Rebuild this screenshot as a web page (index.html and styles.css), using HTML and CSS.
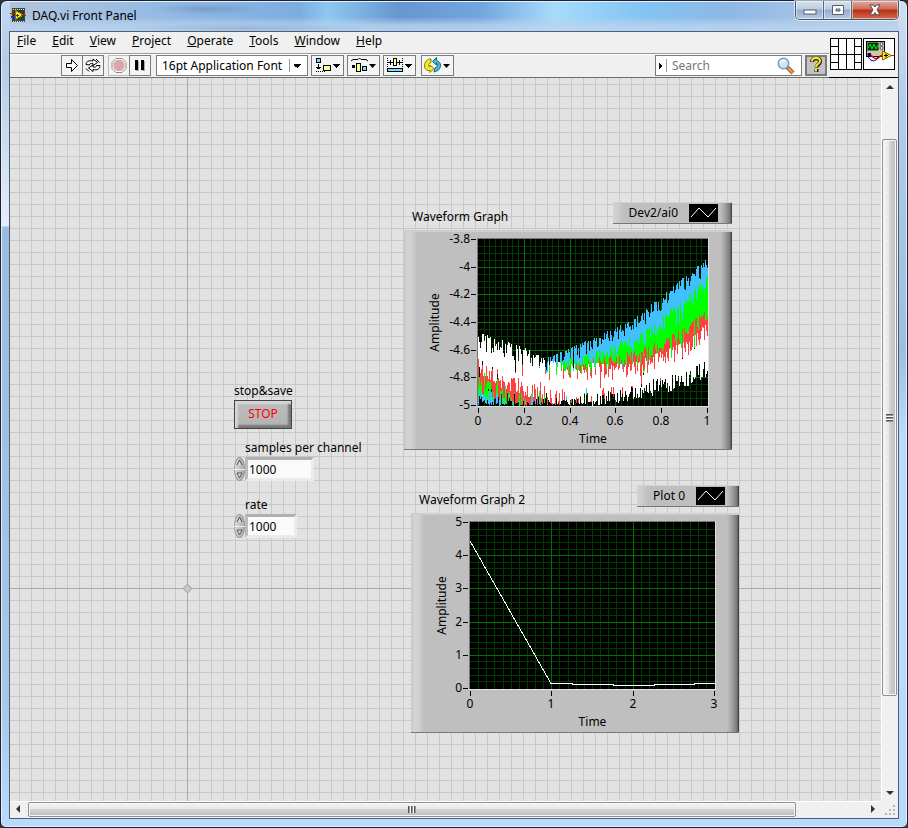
FILE: index.html
```html
<!DOCTYPE html>
<html lang="en">
<head>
  <meta charset="UTF-8" />
  <meta name="viewport" content="width=device-width, initial-scale=1.0" />
  <title>DAQ.vi Front Panel</title>
  <link rel="stylesheet" href="styles.css">
</head>
<body>
  <div class="window">
    <div class="titlebar">
      <svg class="app-icon" width="16" height="14" viewBox="0 0 16 14" shape-rendering="crispEdges">
        <rect x="2" width="13" height="14" fill="#444"/>
        <path d="M3 1h11M3 13h11" stroke="#ddd" stroke-dasharray="1 1"/>
        <rect x="3" y="2" width="11" height="10" fill="#164b20"/>
        <path d="M5 2v10l8-5z" fill="#ffe81a" stroke="#8a7900"/>
        <path d="M0 5h5" stroke="#e00"/><path d="M1 9h4" stroke="#22f" stroke-width="2"/>
        <path d="M12 7h4" stroke="#e00"/><path d="M6 7h3M7.500 5.500v3" stroke="#333"/>
      </svg>
      <h1 class="title">DAQ.vi Front Panel</h1>
      <div class="caption">
        <button aria-label="Minimize"><svg width="14" height="12" viewBox="0 0 14 12"><rect x="1" y="6" width="12" height="4" fill="#fff" stroke="#555e70"/></svg></button>
        <button aria-label="Maximize"><svg width="14" height="12" viewBox="0 0 14 12"><path fill-rule="evenodd" d="M1.500 1.500h11v9h-11zM5 5h4v2h-4z" fill="#fff" stroke="#555e70"/></svg></button>
        <button class="close" aria-label="Close"><svg width="14" height="12" viewBox="0 0 14 12"><path d="M2 1h3.500l1.500 2 1.500-2h3.500l-3 4.800 3 5h-3.500l-1.500-2.300-1.500 2.300h-3.500l3-5z" fill="#fff" stroke="#5d4650"/></svg></button>
      </div>
    </div>

    <div class="client">
      <header class="header">
        <div class="bars">
          <nav class="menu">
            <a href="#"><u>F</u>ile</a>
            <a href="#"><u>E</u>dit</a>
            <a href="#"><u>V</u>iew</a>
            <a href="#"><u>P</u>roject</a>
            <a href="#"><u>O</u>perate</a>
            <a href="#"><u>T</u>ools</a>
            <a href="#"><u>W</u>indow</a>
            <a href="#"><u>H</u>elp</a>
          </nav>
          <div class="toolbar">
            <div class="group joined">
              <button class="tool" aria-label="Run"><svg width="20" height="19" viewBox="0 0 20 19"><path d="M4.500 7.500h5v-4l6 6-6 6v-4h-5z" fill="#fff" stroke="#000"/></svg></button>
              <button class="tool" aria-label="Run continuously"><svg width="20" height="19" viewBox="0 0 20 19"><path d="M3 8.500c0-3 3-4.500 7-3.500v-2l4.500 3.500-4.500 3v-2c-2-.5-3.500 0-3.500 1.500z" fill="#fff" stroke="#000"/><path d="M17 9.500c0 3.500-3 5-7 4v2l-4.500-3.500 4.500-3v2c2 .5 3.500 0 3.500-1.500z" fill="#fff" stroke="#000"/><path d="M3 12.500l3 3M13 3l3.500 3.500" stroke="#000"/></svg></button>
            </div>
            <div class="group joined">
              <button class="tool off" aria-label="Abort" disabled><svg width="20" height="19" viewBox="0 0 20 19"><path d="M7 2.500h6l4 4v6l-4 4h-6l-4-4v-6z" fill="#fff" stroke="#888"/><path d="M7.500 4h5l3 3v5l-3 3h-5l-3-3v-5z" fill="#dda5a5"/></svg></button>
              <button class="tool" aria-label="Pause"><svg width="20" height="19" viewBox="0 0 20 19"><path d="M6 5h3v10h-3zM12 5h3v10h-3z" fill="#aaa"/><path d="M5 4h3v10h-3zM11 4h3v10h-3z"/></svg></button>
            </div>
            <select class="font-ring" aria-label="Text settings"><option>16pt Application Font</option></select>
            <div class="group spaced">
              <button class="tool wide" aria-label="Align objects"><svg width="31" height="19" viewBox="0 0 31 19" shape-rendering="crispEdges"><rect x="4.500" y="2.500" width="4" height="4" fill="#6de0ff" stroke="#000"/><path d="M4 15.500h9" stroke="#000" stroke-dasharray="1 1"/><path d="M6.500 8v5M4 11.500h5M5 12.500h3" stroke="#000"/><rect x="11.500" y="9.500" width="7" height="5" fill="#ffff9a" stroke="#000"/><path d="M21 8h7l-3.500 4z"/></svg></button>
              <button class="tool wide" aria-label="Distribute objects"><svg width="31" height="19" viewBox="0 0 31 19"><path d="M3 5l2-1.500h5l1.500-1.500 1.500 1.500h5l2 1.500" fill="none" stroke="#000"/><rect x="4" y="9" width="3" height="3"/><rect x="8.500" y="7.500" width="4" height="8" fill="#ffff9a" stroke="#000"/><rect x="14.500" y="10.500" width="4" height="4" fill="#6de0ff" stroke="#000"/><path d="M21 8h7l-3.500 4z"/></svg></button>
              <button class="tool wide" aria-label="Resize objects"><svg width="31" height="19" viewBox="0 0 31 19" shape-rendering="crispEdges"><path d="M3.500 2v9M18.500 2v9" stroke="#000" stroke-dasharray="1 1"/><path d="M4 6.500h5M13 6.500h5M6.500 4v5M15.500 4v5" stroke="#000"/><rect x="9.500" y="2.500" width="3" height="7" fill="#ffff9a" stroke="#000"/><rect x="3.500" y="12.500" width="15" height="3" fill="#6de0ff" stroke="#000"/><path d="M21 8h7l-3.500 4z"/></svg></button>
            </div>
            <button class="tool wide" aria-label="Reorder"><svg width="31" height="19" viewBox="0 0 31 19"><path d="M9 3c-4 0-6.500 3-6.500 7 0 2 1 3.500 3 4.500h2.500v2l4-4-4-3.500v2c-2 0-2-3.500 1-4.500z" fill="#f3ec16" stroke="#807b00"/><path d="M12 16c4-1 6.500-3 6.500-7 0-2-1.500-3.500-4-4.500v-3l-4 4 4 3.500v-2c2 1 1.500 4-1.500 5z" fill="#4bbfd2" stroke="#12606c"/><path d="M21 8h7l-3.500 4z"/></svg></button>
            <div class="search">
              <svg width="12" height="19" viewBox="0 0 12 19" shape-rendering="crispEdges"><path d="M3 7l4 3-4 3z"/><path d="M10.500 3v13" stroke="#999"/></svg>
              <input type="search" aria-label="Search" placeholder="Search">
              <svg width="18" height="18" viewBox="0 0 18 18"><path d="M10 10l6 6" stroke="#97551f" stroke-width="4"/><path d="M11 11l5 5" stroke="#eda454" stroke-width="2"/><circle cx="6.500" cy="6.500" r="5.200" fill="#c6e8fb" stroke="#8398ad" stroke-width="1.500"/><path d="M3 6c1-3 4-3 5-2" fill="none" stroke="#fff" stroke-width="1.500"/></svg>
            </div>
            <button class="help" aria-label="Context help"><svg width="18" height="17" viewBox="0 0 18 17"><path d="M5 5c0-5 8-5 8-.5 0 3-3.500 3-3.500 6M9.500 12v3" fill="none" stroke="#222" stroke-width="4"/><path d="M5 4.500c0-5 8-4.500 8-.5 0 3-4 3-4 6M9 12v2.500" fill="none" stroke="#ffec00" stroke-width="2"/></svg></button>
          </div>
        </div>
        <div class="icon-pane">
          <svg width="32" height="32" viewBox="0 0 32 32" shape-rendering="crispEdges"><rect x=".5" y=".5" width="31" height="31" fill="#fff" stroke="#000"/><path d="M8.500 0v32M16.500 0v32M24.500 0v32M0 16.500h32M0 8.500h8M0 24.500h8M24 8.500h8M24 24.500h8" stroke="#000"/></svg>
          <svg width="32" height="32" viewBox="0 0 32 32"><rect x=".5" y=".5" width="31" height="31" fill="#fff" stroke="#000"/><rect x="3.500" y="3.500" width="18" height="15" fill="#c9c9a2" stroke="#000"/><rect x="4.500" y="4.500" width="11" height="8" fill="#031"/><path d="M5 10l2-4 2 5 2-5 2 5 2-4" fill="none" stroke="#0e0"/><circle cx="18.500" cy="6" r="1.500" fill="#fff" stroke="#444"/><circle cx="18.500" cy="10" r="1.500" fill="#fff" stroke="#444"/><path d="M4 16.500c4-3 6 6 10 4s4-4 6-3" fill="none" stroke="#e00" stroke-width="1.500"/><path d="M5 17c1 8 10 7 10 1" fill="none" stroke="#008"/><rect x="5" y="15" width="3" height="3" fill="#008"/><path d="M28 17.500h3" stroke="#e00"/><path d="M19.500 13v9l9-4.500z" fill="#ffe81a" stroke="#777000"/><path d="M21 17.500h4M23 15.500v4" stroke="#000"/></svg>
        </div>
      </header>

      <main class="panel">
        <span class="origin"></span>

        <div class="control stop">
          <label for="stop">stop&amp;save</label>
          <button id="stop" class="stop-button">STOP</button>
        </div>
        <div class="control samples">
          <label for="samples">samples per channel</label>
          <div class="numeric">
            <span class="spin">
              <button aria-label="Increment samples"><svg width="11" height="11" viewBox="0 0 11 11"><path d="M3 8l2.500-5 2.500 5" fill="#ddd" stroke="#444"/></svg></button>
              <button aria-label="Decrement samples"><svg width="11" height="11" viewBox="0 0 11 11"><path d="M3 3l2.500 5 2.500-5z" fill="#ddd" stroke="#555"/></svg></button>
            </span>
            <input id="samples" type="text" value="1000">
          </div>
        </div>
        <div class="control rate">
          <label for="rate">rate</label>
          <div class="numeric">
            <span class="spin">
              <button aria-label="Increment rate"><svg width="11" height="11" viewBox="0 0 11 11"><path d="M3 8l2.500-5 2.500 5" fill="#ddd" stroke="#444"/></svg></button>
              <button aria-label="Decrement rate"><svg width="11" height="11" viewBox="0 0 11 11"><path d="M3 3l2.500 5 2.500-5z" fill="#ddd" stroke="#555"/></svg></button>
            </span>
            <input id="rate" type="text" value="1000">
          </div>
        </div>

        <section class="graph graph-1">
          <div class="graph-head">
            <h2>Waveform Graph</h2>
            <div class="legend">Dev2/ai0 <svg width="29" height="18" viewBox="0 0 29 18"><rect width="29" height="18"/><path d="M2 13l8-9 9 9 8-9" fill="none" stroke="#fff"/></svg></div>
          </div>
          <svg class="chart" id="chart1" width="328" height="217" viewBox="0 0 328 217"></svg>
        </section>
        <section class="graph graph-2">
          <div class="graph-head">
            <h2>Waveform Graph 2</h2>
            <div class="legend">Plot 0 <svg width="29" height="18" viewBox="0 0 29 18"><rect width="29" height="18"/><path d="M2 13l8-9 9 9 8-9" fill="none" stroke="#fff"/></svg></div>
          </div>
          <svg class="chart" id="chart2" width="328" height="217" viewBox="0 0 328 217"></svg>
        </section>
      </main>

      <div class="vscroll">
        <svg class="arrow" width="17" height="17" viewBox="0 0 17 17"><path d="M4 11l4-4 4 4z"/></svg>
        <div class="vtrack"><div class="vthumb"><span class="ridges"></span></div></div>
        <svg class="arrow" width="17" height="17" viewBox="0 0 17 17"><path d="M4 7h8l-4 4z"/></svg>
      </div>
      <div class="hscroll">
        <svg class="arrow" width="18" height="17" viewBox="0 0 18 17"><path d="M10 3v8l-4-4z"/></svg>
        <div class="htrack"><div class="hthumb"><span class="ridges upright"></span></div></div>
        <svg class="arrow" width="17" height="17" viewBox="0 0 17 17"><path d="M7 3v8l4-4z"/></svg>
      </div>
      <div class="grip"><svg width="12" height="12" viewBox="0 0 12 12" fill="#b5b5b5"><path d="M9 1h2v2h-2zM9 5h2v2h-2zM5 5h2v2h-2zM9 9h2v2h-2zM5 9h2v2h-2zM1 9h2v2h-2z"/></svg></div>
    </div>
  </div>
  <script src="script.js"></script>
</body>
</html>
```

FILE: styles.css
```css
:root {
  --face: #f0f0f0;
  --gray: #bfbfbf;
  --line: #7a7a7a;
  --font: "Noto Sans", "Open Sans", sans-serif;
}

* {
  margin: 0;
  padding: 0;
  box-sizing: border-box;
}

body {
  background: #333;
  font: 12px/16px var(--font);
  color: #000;
}

button,
input,
select {
  font: inherit;
  color: inherit;
}

svg {
  display: block;
}

.window {
  display: flex;
  flex-direction: column;
  height: 100vh;
  padding: 0 8px 8px;
  border: 1px solid #1b2130;
  border-radius: 7px 7px 6px 6px;
  box-shadow: inset 0 0 0 1px #e4f2ff;
  background:
    radial-gradient(closest-side, rgba(60, 90, 130, 0.25), transparent) 150px 2px / 110px 12px no-repeat,
    radial-gradient(closest-side, rgba(60, 90, 130, 0.2), transparent) 110px 22px / 270px 10px no-repeat,
    linear-gradient(#c0d8f2, #b4cce6 60px, #e6eef7 225px, #9cbbdd 226px, #a9c7e7 700px, transparent 820px) left / 9px 100% no-repeat,
    linear-gradient(#d2dff0, #b3cce9 100px, #9dbde0 350px, #b9dafc 430px, #b9dafc) right / 9px 100% no-repeat,
    linear-gradient(transparent 16px, rgba(186, 210, 236, 0.8) 24px, #b9dafc 40px),
    linear-gradient(90deg, #b2c3d6, #a8c3e0 6%, #90b8e4 20%, #7cade0 33%, #8ec8f0 36%, #6597d0 44%, #72a6df 53%, #a5dcfb 61%, #83c3f3 71%, #8db8e5 80%, #bdd0e8);
}

.titlebar {
  display: flex;
  align-items: flex-start;
  height: 30px;
}

.app-icon {
  margin: 7px 6px 0 1px;
}

.title {
  flex: 1;
  padding-top: 7px;
  font-size: 12px;
  font-weight: 400;
}

.caption {
  display: flex;
  border: 1px solid #46566d;
  border-top: 0;
  border-radius: 0 0 5px 5px;
  overflow: hidden;
  box-shadow: 0 0 0 1px rgba(255, 255, 255, 0.6);
}

.caption button {
  display: flex;
  align-items: center;
  justify-content: center;
  width: 28px;
  height: 18px;
  border: 0;
  border-right: 1px solid #56667e;
  background: linear-gradient(#d5e1ef, #bccde1 45%, #93acc9 50%, #b7cce4);
  box-shadow: inset 0 0 0 1px rgba(255, 255, 255, 0.5);
}

.caption .close {
  width: 46px;
  border-right: 0;
  background: linear-gradient(#e3a99c, #cf6b59 45%, #b52f19 50%, #d6694a);
}

.client {
  flex: 1;
  display: grid;
  grid-template-columns: 1fr 17px;
  grid-template-rows: auto 1fr 17px;
  border: 1px solid #4d5f77;
  background: var(--face);
  min-height: 0;
}

.header {
  grid-column: 1 / 3;
  display: flex;
}

.bars {
  flex: 1;
}

.menu {
  display: flex;
  gap: 16px;
  height: 22px;
  padding: 1px 7px 0;
  border-bottom: 1px solid #999;
  box-shadow: 0 1px #fff;
}

.menu a {
  color: inherit;
  text-decoration: none;
}

.toolbar {
  display: flex;
  align-items: center;
  gap: 5px;
  height: 24px;
  padding: 0 2px 0 51px;
  border-bottom: 1px solid #6e6e6e;
}

.group {
  display: flex;
}

.joined .tool + .tool {
  margin-left: -1px;
}

.joined + .joined {
  margin-left: -1px;
}

.spaced {
  gap: 3px;
}

.tool {
  width: 22px;
  height: 21px;
  border: 1px solid var(--line);
  background: #f4f4f4;
}

.tool.wide {
  width: 33px;
}

.tool.off {
  border-color: #bbb;
}

.font-ring {
  width: 152px;
  height: 21px;
  margin-right: -2px;
  padding-left: 5px;
  border: 1px solid var(--line);
  border-radius: 0;
  appearance: none;
  background:
    conic-gradient(from -45deg at 50% 100%, #000 90deg, transparent 0) right 6px top 8px / 8px 4px no-repeat,
    linear-gradient(#999, #999) right 17px center / 1px 13px no-repeat,
    #fff;
}

.search {
  display: flex;
  align-items: center;
  width: 147px;
  height: 21px;
  margin-left: auto;
  margin-right: -2px;
  padding-right: 6px;
  border: 1px solid var(--line);
  background: #fff;
}

.search input {
  flex: 1;
  min-width: 0;
  padding-left: 4px;
  border: 0;
  background: none;
}

.search input::placeholder {
  color: #777;
}

.help {
  width: 22px;
  height: 21px;
  border: 2px solid var(--line);
  background: #c3c3c3;
}

.icon-pane {
  display: flex;
  gap: 1px;
  padding: 6px 3px 0 1px;
  border-bottom: 1px solid #000;
}

/* front panel */

.panel {
  position: relative;
  overflow: hidden;
  background:
    linear-gradient(#aaa, #aaa) 177px 0 / 1px 100% no-repeat,
    linear-gradient(#aaa, #aaa) 0 510px / 100% 1px no-repeat,
    linear-gradient(90deg, #c8c8c8 1px, transparent 1px) 9px 0 / 12px 12px,
    linear-gradient(#c8c8c8 1px, transparent 1px) 0 6px / 12px 12px,
    #e2e2e2;
}

.origin {
  position: absolute;
  left: 174px;
  top: 507px;
  width: 7px;
  height: 7px;
  border: 1px solid #aaa;
  background: #c8c8c8;
  transform: rotate(45deg);
}

.control,
.graph {
  position: absolute;
}

.control label {
  display: block;
  white-space: nowrap;
}

.stop {
  left: 224px;
  top: 305px;
}

.stop-button {
  display: block;
  width: 58px;
  height: 29px;
  margin-top: 1px;
  padding-bottom: 2px;
  border: 1px solid #444;
  background: linear-gradient(#bdbdbd, #b3b3b3);
  box-shadow: inset 3px 3px 2px #d6d6d6, inset -3px -3px 2px #777;
  color: #f00;
}

.samples {
  left: 224px;
  top: 362px;
}

.rate {
  left: 224px;
  top: 419px;
}

.samples label,
.rate label {
  padding-left: 11px;
}

.numeric {
  display: flex;
  margin-top: 1px;
}

.spin {
  display: flex;
  flex-direction: column;
  width: 11px;
  height: 24px;
  border-radius: 50%;
  background: linear-gradient(90deg, #e0e0e0, #a8a8a8);
  box-shadow: inset 0 0 0 1px #999;
  overflow: hidden;
}

.spin button {
  flex: 1;
  border: 0;
  background: none;
}

.spin button + button {
  border-top: 1px solid #eee;
}

.numeric input {
  width: 69px;
  height: 24px;
  padding-left: 1px;
  border: solid;
  border-width: 3px;
  border-color: #b0b0b0 #ebebeb #ebebeb #bbb;
  background: #fafafa;
}

.rate input {
  width: 52px;
}

.graph-1 {
  left: 394px;
  top: 124px;
}

.graph-2 {
  left: 401px;
  top: 407px;
}

.graph-head {
  display: flex;
  justify-content: space-between;
  padding-left: 8px;
  margin-bottom: 5px;
}

.graph h2 {
  padding-top: 7px;
  font-size: 12px;
  font-weight: 400;
}

.legend {
  display: flex;
  align-items: center;
  gap: 11px;
  height: 22px;
  padding: 0 14px 0 16px;
  border-top: 1px solid #d2d2d2;
  border-bottom: 1px solid #777;
  background: linear-gradient(90deg, #d4d4d4, #cacaca 6px, var(--gray) 11px, var(--gray) calc(100% - 12px), #aaa calc(100% - 8px), #787878 calc(100% - 2px), #333);
}

.chart {
  box-sizing: content-box;
  border-top: 2px solid #cecece;
  border-bottom: 1px solid #777;
  background: linear-gradient(90deg, #c8c8c8, #d4d4d4 4px, #d0d0d0 8px, var(--gray) 13px, var(--gray) calc(100% - 12px), #a8a8a8 calc(100% - 8px), #787878 calc(100% - 2px), #333);
}

.chart text {
  font: 12px var(--font);
}

.chart .tick-y {
  text-anchor: end;
}

.chart .tick-x,
.chart .axis {
  text-anchor: middle;
}

/* scroll bars */

.vscroll {
  display: flex;
  flex-direction: column;
  border-left: 1px solid #fff;
}

.hscroll {
  display: flex;
  border-top: 1px solid #fff;
}

.arrow {
  flex: none;
  fill: #333;
}

.vtrack,
.htrack {
  flex: 1;
  display: flex;
  min-width: 0;
  min-height: 0;
}

.vtrack {
  flex-direction: column;
}

.vtrack::before {
  content: "";
  flex: 44;
}

.vtrack::after {
  content: "";
  flex: 88;
}

.htrack::after {
  content: "";
  flex: 68;
}

.vthumb,
.hthumb {
  display: flex;
  align-items: center;
  justify-content: center;
  border: 1px solid #8f8f8f;
  border-radius: 2px;
  box-shadow: inset 0 0 0 1px #f7f7f7;
}

.vthumb {
  flex: 557;
  width: 15px;
  background: linear-gradient(90deg, #f5f5f5, #e6e6e6 45%, #d3d3d3 50%, #bbb);
}

.hthumb {
  flex: 768;
  height: 15px;
  background: linear-gradient(#f5f5f5, #e6e6e6 45%, #d3d3d3 50%, #bbb);
}

.ridges {
  width: 7px;
  height: 8px;
  background: repeating-linear-gradient(#555 0 1px, #999 1px 2px, #fff 2px 3px);
}

.upright {
  width: 8px;
  height: 7px;
  background: repeating-linear-gradient(90deg, #555 0 1px, #999 1px 2px, #fff 2px 3px);
}

.grip {
  display: flex;
  align-items: center;
  justify-content: center;
}
```

FILE: script.js
```js
const NS = "http://www.w3.org/2000/svg";

function add(svg, tag, attrs, text) {
  const el = document.createElementNS(NS, tag);
  for (const key in attrs) el.setAttribute(key, attrs[key]);
  if (text !== undefined) el.textContent = text;
  svg.appendChild(el);
}

// Draws the plot area, its grid, ticks and axis names
function drawAxes(svg, o) {
  const { x, y, w, h } = o;
  add(svg, "rect", { x: x - 1, y: y - 1, width: w + 2, height: h + 2, fill: "#e0e0e0" });
  add(svg, "path", { d: `M${x - 1} ${y + h}V${y - 1}H${x + w}V${y}H${x}V${y + h}z`, fill: "#777" });
  add(svg, "rect", { x, y, width: w, height: h, fill: "#000" });

  let minor = "", major = "";
  const nx = (o.xTicks.length - 1) * o.xMinor;
  const ny = (o.yTicks.length - 1) * o.yMinor;
  for (let i = 1; i < nx; i++) {
    const line = `M${x + Math.round(i * (w - 1) / nx) + 0.5} ${y}v${h}`;
    if (i % o.xMinor) minor += line; else major += line;
  }
  for (let i = 1; i < ny; i++) {
    const line = `M${x} ${y + Math.round(i * (h - 1) / ny) + 0.5}h${w}`;
    if (i % o.yMinor) minor += line; else major += line;
  }
  add(svg, "path", { d: minor, stroke: "#003c00" });
  add(svg, "path", { d: major, stroke: "#007000" });

  o.xTicks.forEach((label, i) => {
    const tx = x + Math.round(i * (w - 1) / (o.xTicks.length - 1));
    add(svg, "path", { d: `M${tx + 0.5} ${y + h + 2}v5`, stroke: "#000" });
    add(svg, "text", { x: tx, y: y + h + 19, class: "tick-x" }, label);
  });
  o.yTicks.forEach((label, i) => {
    const ty = y + Math.round(i * (h - 1) / (o.yTicks.length - 1));
    add(svg, "path", { d: `M${x - 7} ${ty + 0.5}h5`, stroke: "#000" });
    add(svg, "text", { x: x - 8, y: ty + 4, class: "tick-y" }, label);
  });

  add(svg, "text", { x: x + w / 2, y: y + h + 37, class: "axis" }, "Time");
  const ax = o.nameX, ay = y + h / 2;
  add(svg, "text", { x: ax, y: ay, class: "axis", transform: `rotate(-90 ${ax} ${ay})` }, "Amplitude");
}

let seed = 7;
function random() {
  seed = (seed * 16807) % 2147483647;
  return seed / 2147483647;
}

function level(points, t) {
  const p = t * (points.length - 1);
  const i = Math.min(Math.floor(p), points.length - 2);
  return points[i] + (points[i + 1] - points[i]) * (p - i);
}

// How far a stroke falls short of its level: mostly little, now and then a deep notch
function notch(noise) {
  const deep = random() > 0.93 ? 1.8 : 1;
  return Math.pow(random(), 1.6) * noise * deep;
}

// One vertical stroke per pixel column; top and bottom hold the level at every tenth of a second
const channels = [
  { color: "#40c0ff", noise: 15, top: [140, 140, 130, 118, 109, 99, 88, 76, 57, 37, 18], bottom: [167, 167, 167, 165, 160, 155, 150, 140, 130, 115, 90] },
  { color: "#00ff00", noise: 16, top: [130, 135, 140, 128, 119, 113, 105, 94, 78, 58, 37], bottom: [158, 166, 167, 165, 160, 155, 150, 140, 130, 115, 100] },
  { color: "#ff4040", noise: 17, top: [118, 120, 125, 130, 127, 119, 115, 111, 101, 89, 70], bottom: [153, 162, 167, 167, 166, 164, 158, 148, 142, 130, 115] },
  { color: "#ffffff", noise: 17, top: [93, 101, 108, 121, 125, 124, 124, 121, 112, 103, 84], bottom: [134, 149, 157, 164, 166, 167, 164, 160, 155, 149, 137] }
];

const chart1 = document.getElementById("chart1");
const area = { x: 74, y: 7, w: 230, h: 167 };
drawAxes(chart1, {
  ...area, nameX: 35, xMinor: 8, yMinor: 4,
  xTicks: ["0", "0.2", "0.4", "0.6", "0.8", "1"],
  yTicks: ["-3.8", "-4", "-4.2", "-4.4", "-4.6", "-4.8", "-5"]
});
channels.forEach(c => {
  let d = "";
  for (let i = 0; i < area.w; i++) {
    const t = i / (area.w - 1);
    const top = Math.round(level(c.top, t) + notch(c.noise));
    const bottom = Math.round(level(c.bottom, t) - notch(c.noise));
    if (bottom > top) d += `M${area.x + i + 0.5} ${area.y + top}V${area.y + bottom}`;
  }
  add(chart1, "path", { d, stroke: c.color, "shape-rendering": "crispEdges" });
});

const chart2 = document.getElementById("chart2");
drawAxes(chart2, {
  x: 59, y: 7, w: 245, h: 167, nameX: 35, xMinor: 10, yMinor: 5,
  xTicks: ["0", "1", "2", "3"],
  yTicks: ["5", "4", "3", "2", "1", "0"]
});
add(chart2, "path", {
  d: "M59 26L140 168.500H161V169.500H202V170.500H243V169.500H283V168.500H304",
  fill: "none", stroke: "#fff", "shape-rendering": "crispEdges"
});
```
